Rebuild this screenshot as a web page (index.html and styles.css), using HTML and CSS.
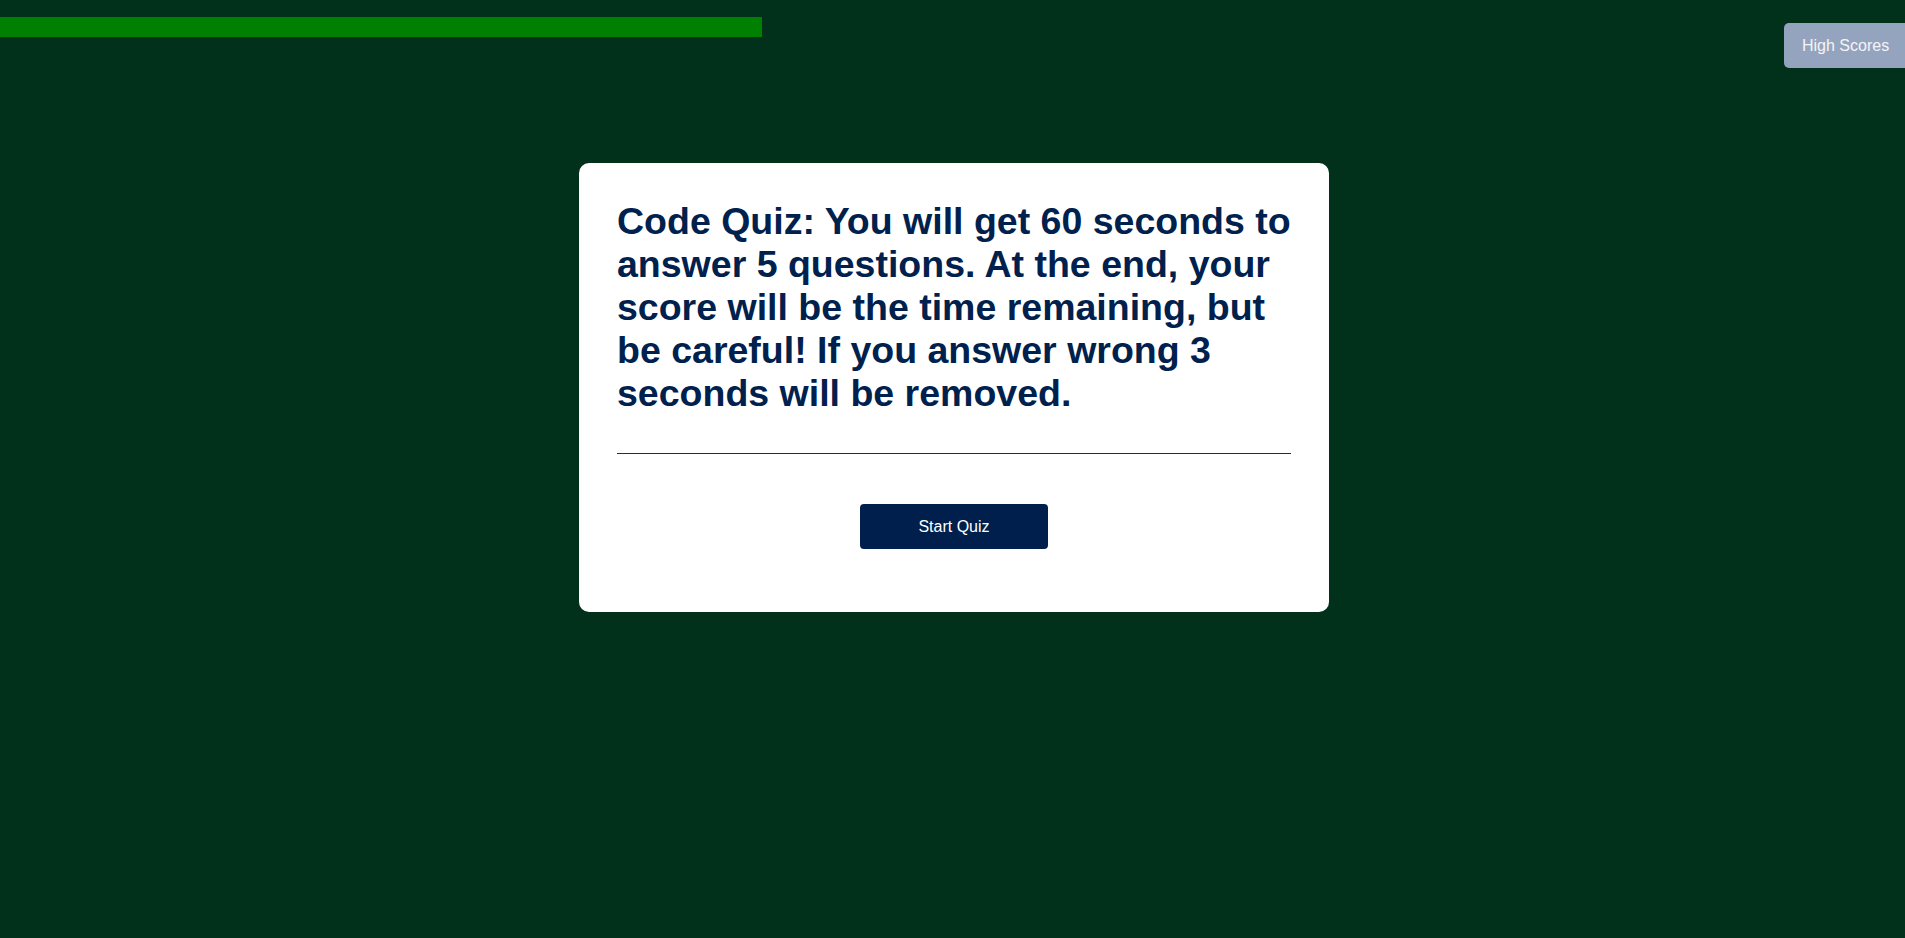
FILE: index.html
```html
<!DOCTYPE html>
<html lang="en">
<head>
<meta charset="utf-8">
<title>Code Quiz</title>
<link rel="stylesheet" href="styles.css">
</head>
<body>
<header class="top">
  <div class="timer-track"><div class="timer-bar"></div></div>
  <button class="scores-btn">High Scores</button>
</header>
<main class="card">
  <h1 class="intro">Code Quiz: You will get 60 seconds to answer 5 questions. At the end, your score will be the time remaining, but be careful! If you answer wrong 3 seconds will be removed.</h1>
  <hr class="divider">
  <div class="actions">
    <button class="start-btn">Start Quiz</button>
  </div>
</main>
</body>
</html>
```
FILE: styles.css
```css
html, body {
  margin: 0;
  padding: 0;
}
body {
  background: #01311b;
  font-family: "Liberation Sans", Arial, sans-serif;
  min-height: 938px;
}
.top {
  display: flex;
  align-items: flex-start;
}
.timer-track {
  width: 40%;
  margin-top: 17px;
}
.timer-bar {
  height: 20px;
  background: #008000;
}
.scores-btn {
  margin-left: auto;
  margin-top: 23px;
  width: 121px;
  height: 45px;
  padding: 0 0 0 18px;
  text-align: left;
  border: none;
  border-radius: 5px 0 0 5px;
  background: #94a4bf;
  color: #f4f4f6;
  font-family: "Liberation Sans", Arial, sans-serif;
  font-size: 16px;
}
.card {
  width: 750px;
  box-sizing: border-box;
  margin: 95px 0 0 calc(50% - 373.5px);
  padding: 37px 38px 63px 38px;
  background: #ffffff;
  border-radius: 10px;
}
.intro {
  margin: 0;
  color: #00214d;
  font-size: 37.5px;
  line-height: 43px;
  font-weight: bold;
}
.divider {
  margin: 38px 0 0;
  border: none;
  border-top: 1px solid #2b2b2b;
  height: 0;
}
.actions {
  display: flex;
  justify-content: center;
  margin-top: 50px;
}
.start-btn {
  width: 188px;
  height: 45px;
  border: none;
  border-radius: 4px;
  background: #001f4d;
  color: #ffffff;
  font-family: "Liberation Sans", Arial, sans-serif;
  font-size: 16px;
}
```
